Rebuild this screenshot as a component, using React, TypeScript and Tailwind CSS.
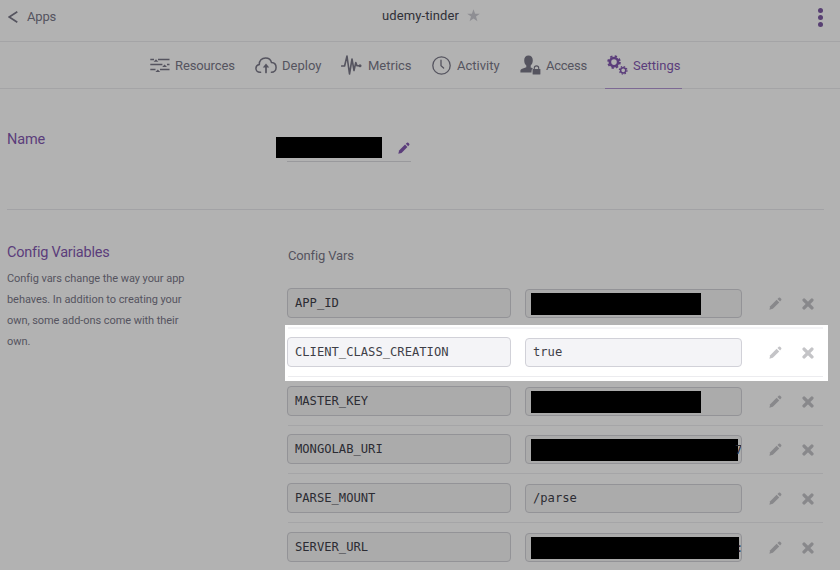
import React from "react";

type IconProps = { className?: string };

function Pencil({ className = "" }: IconProps) {
  return (
    <svg viewBox="0 0 14 14" className={className} fill="currentColor">
      <path d="M0.4 13.6 1.3 9.9 8.2 3 11 5.8 4.1 12.7Z" />
      <path d="M9.1 2.1 10.5.8Q11.3.2 12 .9L13.1 2Q13.8 2.7 13.1 3.5L11.9 4.9Z" />
    </svg>
  );
}

function Cross({ className = "" }: IconProps) {
  return (
    <svg viewBox="0 0 12 12" className={className} stroke="currentColor" strokeWidth="3.4" strokeLinecap="round" fill="none">
      <path d="M2.1 2.1 9.9 9.9M9.9 2.1 2.1 9.9" />
    </svg>
  );
}

function ResourcesIcon() {
  return (
    <svg width="20" height="16" viewBox="0 0 20 16" fill="none" stroke="currentColor" strokeWidth="1.6">
      <path d="M.3 2.500H4M8 2.500H19.500M.3 7.500H12.400M17 7.500H19.500M.3 12.500H5.500M10 12.500H19.500" />
      <path d="M3.600 4.800 6 2.300 8.400 4.800ZM12.200 9.900 14.600 7.400 17 9.900ZM5.400 15 7.800 12.500 10.200 15Z" fill="currentColor" stroke="none" />
    </svg>
  );
}

function DeployIcon() {
  return (
    <svg width="22" height="17" viewBox="0 0 22 17" fill="none" stroke="currentColor" strokeWidth="1.5" strokeLinecap="round">
      <path d="M5.600 15.300H5C2.700 15.300.9 13.600.9 11.300 1 9.300 2.400 7.800 4.300 7.500 4 3.800 6.900.9 10.500.9c3 0 5.400 1.800 6 4.700 2.700.2 4.600 2.200 4.600 4.900 0 2.800-2 4.800-4.700 4.800" />
      <path d="M11 15.500V9" strokeWidth="1.700" />
      <path d="M7.800 10.500 11 6.500 14.200 10.500Z" fill="currentColor" stroke="none" />
    </svg>
  );
}

function MetricsIcon() {
  return (
    <svg width="21" height="20" viewBox="0 0 21 20" fill="none" stroke="currentColor" strokeWidth="1.6" strokeLinejoin="round" strokeLinecap="round">
      <path d="M.7 11H3.600L6 1 8.500 19 11 4 13 15.500 14.800 7.500 16 10.800H19" />
      <circle cx="19" cy="10.800" r="1.500" fill="currentColor" stroke="none" />
    </svg>
  );
}

function ActivityIcon() {
  return (
    <svg width="19" height="19" viewBox="0 0 19 19" fill="none" stroke="currentColor" strokeWidth="1.300" strokeLinecap="round">
      <circle cx="9.500" cy="9.500" r="8.700" />
      <path d="M9 4.200V9.700L11.600 12" />
    </svg>
  );
}

function AccessIcon() {
  return (
    <svg width="21" height="20" viewBox="0 0 21 20" fill="currentColor">
      <path d="M4.200 5.200C4.200 2.100 5.900.4 8.500.4s4.300 1.700 4.300 4.800c0 2.500-.9 4.200-2.100 5.300v1.900l2.200.9q-1.400 1.200-1.400 3v1.300H.4V15.500q.1-1 1.200-1.500l4.700-1.700v-1.800C5 9.400 4.200 7.700 4.200 5.200Z" />
      <rect x="12.600" y="14" width="7.800" height="5.600" rx=".6" />
      <path d="M14.300 14.300v-1.200a2.200 2.200 0 0 1 4.400 0V14.300" fill="none" stroke="currentColor" strokeWidth="1.100" />
    </svg>
  );
}

function SettingsIcon() {
  return (
    <svg width="21" height="20" viewBox="0 0 21 20" fill="none" stroke="currentColor">
      <circle cx="7" cy="7.100" r="4.100" strokeWidth="2.600" />
      <circle cx="7" cy="7.100" r="5.900" strokeWidth="1.800" strokeDasharray="2.320 2.320" />
      <circle cx="16.200" cy="15.300" r="2.600" strokeWidth="1.500" />
      <circle cx="16.200" cy="15.300" r="3.800" strokeWidth="1.200" strokeDasharray="1.490 1.490" />
    </svg>
  );
}

type Row = { name: string; value?: string; mask?: string; tail?: string; lit?: boolean; size: string };

const rows: Row[] = [
  { name: "APP_ID", mask: "w-[170px]", size: "h-[49px] pt-[8px]" },
  { name: "CLIENT_CLASS_CREATION", value: "true", lit: true, size: "h-[48px] pt-[8px]" },
  { name: "MASTER_KEY", mask: "w-[170px]", size: "h-[49px] pt-[9px]" },
  { name: "MONGOLAB_URI", mask: "w-[207px]", tail: "7", size: "h-[48px] pt-[8px]" },
  { name: "PARSE_MOUNT", value: "/parse", size: "h-[49px] pt-[9px]" },
  { name: "SERVER_URL", mask: "w-[208px]", tail: ":", size: "h-[49px] pt-[9px]" },
];

function ConfigRow({ row }: { row: Row }) {
  const field = row.lit ? "border-[#d1d1d8] bg-[#f4f4f7] text-[#3f3f48]" : "border-[#939397] bg-[#ababab] text-[#2c2c33]";
  const line = row.lit ? "border-[#ececef] shadow-[-3px_-4px_0_#fff,5px_-4px_0_#fff,-3px_4px_0_#fff,5px_4px_0_#fff] bg-white" : "border-[#a5a5a7]";
  return (
    <div className={`flex w-[535px] items-start border-b ${line} ${row.size} ${row.lit ? "relative z-10" : ""}`}>
      {row.lit && <div className="absolute -top-[2px] left-0 h-[2px] w-full bg-[#f4f4f6]" />}
      <div className={`-ml-px flex h-[30px] w-[224px] items-center rounded-[4px] border px-[7px] pt-px ${field}`}>
        {row.name}
      </div>
      <div className={`mt-px ml-[14px] flex h-[29px] w-[217px] items-center overflow-hidden rounded-[4px] border ${row.value ? "px-[7px]" : "pt-px pl-[6px]"} ${field}`}>
        {row.value}
        {row.mask && <div className={`-ml-px h-[22px] shrink-0 bg-black ${row.mask}`} />}
        {row.tail && <span className="-ml-[3px]">{row.tail}</span>}
      </div>
      <div className={`mt-[9px] ml-[27px] flex items-center gap-[20px] ${row.lit ? "text-[#c4c4c7]" : "text-[#88888b]"}`}>
        <Pencil className="h-[13px] w-[13px]" />
        <Cross className="h-[12px] w-[12px]" />
      </div>
    </div>
  );
}

export default function App() {
  return (
    <div className="h-[570px] w-[840px] overflow-hidden bg-[#b2b2b2] font-['Roboto',sans-serif] text-[13px] text-[#55545f]">
      <header className="flex h-[42px] border-b border-[#a4a4a6]">
        <div className="flex h-[33px] w-[382px] items-center gap-[9px] pl-[8px]">
          <svg width="10" height="12" viewBox="0 0 10 12" fill="none" stroke="currentColor" strokeWidth="1.700">
            <path d="M9.300 .8 1.200 6 9.300 11.200" />
          </svg>
          <span className="tracking-[-0.200px]">Apps</span>
        </div>
        <div className="flex h-[31px] flex-1 items-center gap-[8px] text-[#303038]">
          <span className="tracking-[0.100px]">udemy-tinder</span>
          <svg width="13" height="13" viewBox="0 0 14 14" fill="#8e8e93">
            <path d="M7 .2 8.700 5H13.800L9.700 8.200 11.200 13.200 7 10.200 2.800 13.200 4.300 8.200 .2 5H5.300Z" />
          </svg>
        </div>
        <div className="flex w-[22px] flex-col items-start gap-[2px] pt-[8px] text-[#584073]">
          <i className="h-[5px] w-[5px] rounded-full bg-current" />
          <i className="h-[5px] w-[5px] rounded-full bg-current" />
          <i className="h-[5px] w-[5px] rounded-full bg-current" />
        </div>
      </header>
      <nav className="flex h-[47px] border-b border-[#a4a4a6] pl-[150px]">
        <div className="flex w-[105px] items-center gap-[5px]"><ResourcesIcon /><span className="pt-px tracking-[-0.120px]">Resources</span></div>
        <div className="flex w-[86px] items-center gap-[5px]"><DeployIcon /><span className="pt-px">Deploy</span></div>
        <div className="flex w-[91px] items-center gap-[6px]"><MetricsIcon /><span className="pt-px">Metrics</span></div>
        <div className="flex w-[88px] items-center gap-[6px]"><ActivityIcon /><span className="pt-px">Activity</span></div>
        <div className="flex w-[85px] items-center gap-[5px]"><AccessIcon /><span className="pt-px tracking-[-0.250px]">Access</span></div>
        <div className="flex h-[47px] w-[77px] items-center gap-[5px] border-b border-[#7d6994] pl-[2px] text-[#5b3d7b]"><SettingsIcon /><span className="pt-px">Settings</span></div>
      </nav>
      <section className="mx-[7px] flex h-[121px] w-[817px] border-b border-[#a2a2a5]">
        <h2 className="w-[269px] pt-[40px] text-[14.500px] leading-[22px] tracking-[-0.150px] text-[#5b3d7b]">Name</h2>
        <div className="pt-[48px]">
          <div className="flex items-center gap-[16px]">
            <div className="h-[21px] w-[106px] bg-black" />
            <Pencil className="h-[12px] w-[12px] text-[#5b3d7b]" />
          </div>
          <div className="mt-[3px] ml-[11px] h-px w-[124px] bg-[#99999c]" />
        </div>
      </section>
      <section className="flex pl-[7px]">
        <div className="w-[281px] pt-[32px]">
          <h2 className="text-[14.500px] leading-[22px] tracking-[-0.220px] text-[#5b3d7b]">Config Variables</h2>
          <p className="mt-[4px] text-[11px] leading-[21px] tracking-[-0.060px]">
            Config vars change the way your app<br />behaves. In addition to creating your<br />own, some add-ons come with their<br />own.
          </p>
        </div>
        <div className="pt-[36px]">
          <h3 className="h-[34px] text-[13px] leading-[20px] tracking-[-0.150px]">Config Vars</h3>
          <div className="font-['DejaVu_Sans_Mono',monospace] text-[12.150px]">
            {rows.map((row) => <ConfigRow key={row.name} row={row} />)}
          </div>
        </div>
      </section>
    </div>
  );
}
